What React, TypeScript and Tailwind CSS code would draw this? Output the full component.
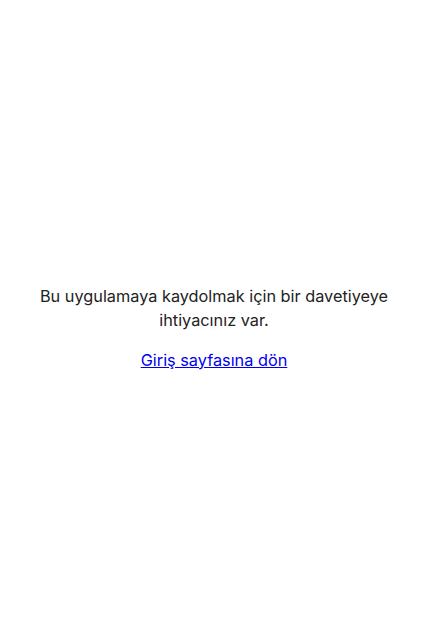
export default function App() {
  return (
    <div className="flex min-h-screen items-center justify-center bg-white pl-[35px] pr-8 pt-4 text-center" style={{ fontFamily: "Inter, sans-serif" }}>
      <div>
        <p className="text-[16.3px] leading-6 text-[#222222]">Bu uygulamaya kaydolmak için bir davetiyeye ihtiyacınız var.</p>
        <a href="#" className="mt-4 inline-block text-[16.3px] leading-6 text-[#0000ee] underline">Giriş sayfasına dön</a>
      </div>
    </div>
  );
}
